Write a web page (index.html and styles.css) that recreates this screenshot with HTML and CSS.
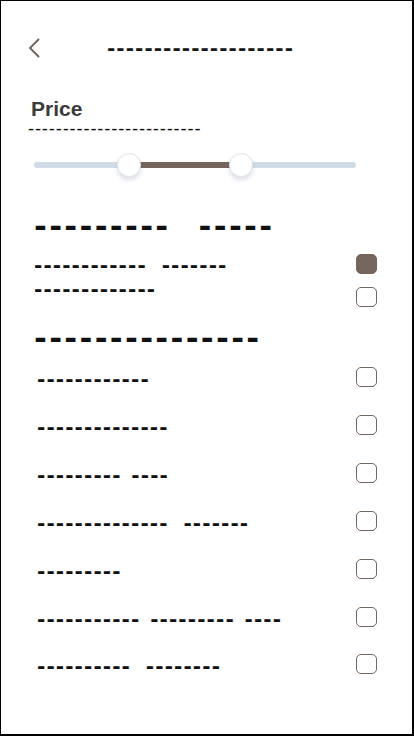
FILE: index.html
```html
<!DOCTYPE html>
<html lang="en">
<head>
<meta charset="utf-8">
<title>Filter</title>
<link rel="stylesheet" href="styles.css">
</head>
<body>
<div class="screen">
  <header class="topbar">
    <svg class="back" width="12" height="20" viewBox="0 0 12 20" aria-hidden="true">
      <path d="M10.5 1.5 L2 10 L10.5 18.5" fill="none" stroke="#76665e" stroke-width="2" stroke-linecap="round" stroke-linejoin="round"/>
    </svg>
    <div class="title">--------------------</div>
  </header>

  <section class="price">
    <h2 class="price-label">Price</h2>
    <div class="price-sub">-------------------------</div>
    <div class="slider">
      <div class="track"></div>
      <div class="fill" style="left:95px;width:112px"></div>
      <div class="thumb" style="left:83px"></div>
      <div class="thumb" style="left:195px"></div>
    </div>
  </section>

  <h3 class="heading heading-1">--------- -----</h3>
  <div class="group-top">
    <div class="labels">
      <div class="label">------------ &#8201;-------</div>
      <div class="label">-------------</div>
    </div>
    <div class="boxes">
      <span class="box checked"></span>
      <span class="box"></span>
    </div>
  </div>

  <h3 class="heading heading-2">---------------</h3>
  <ul class="list">
    <li class="row"><span class="label">------------</span><span class="box"></span></li>
    <li class="row"><span class="label">--------------</span><span class="box"></span></li>
    <li class="row"><span class="label">--------- ----</span><span class="box"></span></li>
    <li class="row"><span class="label">-------------- &#8201;-------</span><span class="box"></span></li>
    <li class="row"><span class="label">---------</span><span class="box"></span></li>
    <li class="row"><span class="label">----------- --------- ----</span><span class="box"></span></li>
    <li class="row"><span class="label">---------- &#8201;--------</span><span class="box"></span></li>
  </ul>
</div>
</body>
</html>
```

FILE: styles.css
```css
* { box-sizing: border-box; }
html, body { margin: 0; padding: 0; background: #fff; }
body { font-family: "DejaVu Sans", "Liberation Sans", sans-serif; }

.screen {
  width: 414px;
  height: 736px;
  border-style: solid;
  border-color: #000;
  border-width: 1px 2px 2px 1px;
  overflow: hidden;
  background: #fff;
}

.topbar {
  display: flex;
  align-items: center;
  height: 20px;
  margin-top: 37px;
  padding-left: 27px;
}
.back { display: block; flex: none; }
.title {
  margin-left: 67px;
  font-weight: 700;
  font-size: 20px;
  line-height: 20px;
  letter-spacing: 1.05px;
  color: #1a1a1a;
  white-space: pre;
}

.price { margin-top: 39px; }
.price-label {
  margin: 0 0 0 30px;
  font-family: "Liberation Sans", Arial, sans-serif;
  font-weight: 700;
  font-size: 21px;
  line-height: 24px;
  color: #3b3b3b;
}
.price-sub {
  margin-left: 27px;
  font-size: 17px;
  line-height: 14px;
  letter-spacing: 0.8px;
  color: #111;
  white-space: pre;
}

.slider {
  position: relative;
  margin: 18px 0 0 33px;
  width: 322px;
  height: 24px;
}
.track {
  position: absolute;
  left: 0; right: 0; top: 9px;
  height: 6px;
  border-radius: 3px;
  background: #d2dce6;
}
.fill {
  position: absolute;
  top: 9px;
  height: 6px;
  background: #75655d;
}
.thumb {
  position: absolute;
  top: 0;
  width: 24px;
  height: 24px;
  border-radius: 50%;
  background: #fff;
  border: 1px solid #dde5ee;
  box-shadow: 0 3px 4px rgba(60, 80, 110, 0.18);
}

.heading {
  margin: 0;
  font-weight: 700;
  font-size: 31px;
  line-height: 31px;
  letter-spacing: 2.3px;
  word-spacing: 15px;
  color: #111;
  white-space: pre;
  margin-left: 33px;
}
.heading-1 { margin-top: 34px; }
.heading-2 { margin-top: 16px; }

.label {
  font-weight: 700;
  font-size: 20px;
  letter-spacing: 1.1px;
  word-spacing: 1.7px;
  color: #111;
  white-space: pre;
}

.group-top {
  display: flex;
  justify-content: space-between;
  margin-top: 11px;
  padding: 0 35px 0 33px;
}
.labels { display: flex; flex-direction: column; }
.labels .label { line-height: 24px; }
.boxes {
  display: flex;
  flex-direction: column;
  gap: 13px;
  padding-top: 0.5px;
}

.box {
  display: block;
  flex: none;
  width: 21px;
  height: 20px;
  border: 1.5px solid #75655d;
  border-radius: 5px;
  background: #fff;
}
.box.checked { background: #75655d; }

.list {
  list-style: none;
  margin: 0;
  padding: 0 35px 0 36px;
}
.row {
  display: flex;
  justify-content: space-between;
  align-items: center;
  height: 47.85px;
}
.row .label {
  line-height: 20px;
  padding-top: 4px;
}
```
